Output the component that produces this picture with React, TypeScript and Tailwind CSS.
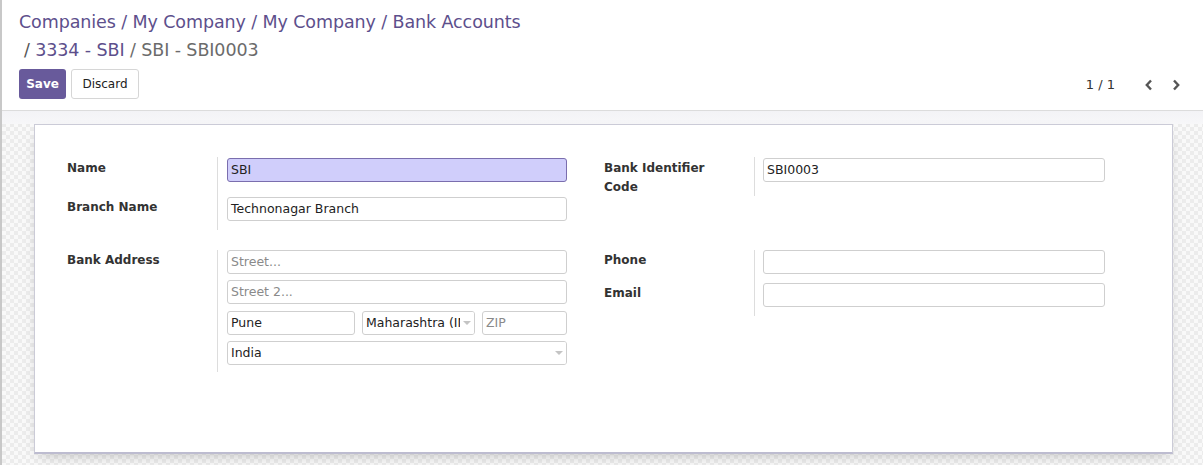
import React from "react";

function Field({
  value,
  placeholder,
  className = "",
  select = false,
  clip = false,
  highlight = false,
}: {
  value?: string;
  placeholder?: string;
  className?: string;
  select?: boolean;
  clip?: boolean;
  highlight?: boolean;
}) {
  return (
    <div
      className={`relative h-[24px] rounded-[3px] border flex items-center pl-[3px] pr-[3px] text-[12.5px] leading-none overflow-hidden whitespace-nowrap ${
        highlight ? "bg-[#d0cefb] border-[#7a6eae]" : "bg-white border-[#cfcfcf]"
      } ${className}`}
    >
      {value !== undefined ? (
        <span className={`text-[#222] ${clip ? "overflow-hidden pr-[12px]" : ""}`}>{value}</span>
      ) : (
        <span className="text-[#8a8a8a]">{placeholder}</span>
      )}
      {select && (
        <span className="absolute right-0 top-0 h-full w-[14px] bg-white flex items-center justify-center">
          <span className="w-0 h-0 border-l-[4px] border-r-[4px] border-t-[4px] border-l-transparent border-r-transparent border-t-[#c4c4c4]" />
        </span>
      )}
    </div>
  );
}

export default function App() {
  return (
    <div className="w-[1203px] h-[465px] overflow-hidden flex flex-col border-l-2 border-[#c8c8c8] bg-white font-['DejaVu_Sans',sans-serif] text-[#333]">
      {/* Control panel */}
      <div className="h-[111px] shrink-0 border-b border-[#dcdcdc] bg-white pl-[17px] pr-[22px] pt-[8px]">
        <div className="text-[17.5px] leading-[28px] tracking-[-0.1px]">
          <div className="whitespace-nowrap">
            <span className="text-[#5d4f8c]">Companies</span>
            <span className="text-[#5d4f8c]"> / </span>
            <span className="text-[#5d4f8c]">My Company</span>
            <span className="text-[#5d4f8c]"> / </span>
            <span className="text-[#5d4f8c]">My Company</span>
            <span className="text-[#5d4f8c]"> / </span>
            <span className="text-[#5d4f8c]">Bank Accounts</span>
          </div>
          <div className="whitespace-nowrap pl-[5px]">
            <span className="text-[#555]">/ </span>
            <span className="text-[#5d4f8c]">3334 - SBI</span>
            <span className="text-[#6b6b6b]"> / SBI - SBI0003</span>
          </div>
        </div>
        <div className="mt-[5px] flex items-center justify-between">
          <div className="flex gap-[5px]">
            <div className="h-[30px] w-[47px] rounded-[3px] bg-[#685a9b] text-white text-[12px] font-bold flex items-center justify-center">
              Save
            </div>
            <div className="h-[30px] w-[68px] rounded-[3px] bg-white border border-[#d6d6d6] text-[#222] text-[12px] flex items-center justify-center">
              Discard
            </div>
          </div>
          <div className="flex items-center text-[13px] text-[#333] pt-[2px]">
            <span>1 / 1</span>
            <svg className="ml-[29px]" width="10" height="12" viewBox="0 0 10 12">
              <path d="M7 1.5 L2.8 6 L7 10.5" fill="none" stroke="#555" strokeWidth="2.4" strokeLinejoin="miter" />
            </svg>
            <svg className="ml-[17px]" width="10" height="12" viewBox="0 0 10 12">
              <path d="M3 1.5 L7.2 6 L3 10.5" fill="none" stroke="#555" strokeWidth="2.4" strokeLinejoin="miter" />
            </svg>
          </div>
        </div>
      </div>

      {/* Sheet background */}
      <div className="flex-1 flex flex-col bg-[image:repeating-conic-gradient(#ececec_0_25%,#f9f9f9_0_50%)] bg-[length:8px_8px]">
        <div className="h-[13px] shrink-0 bg-[linear-gradient(#f3f3f6,#f7f7f9)]" />
        <div className="ml-[32px] mr-[30px] h-[330px] shrink-0 bg-white border border-[#cbcbd7] border-b-2 border-b-[#bdbcd0] shadow-[0_6px_14px_-6px_rgba(0,0,0,0.25)] pt-[32px] pl-[32px]">
          {/* Row A */}
          <div className="flex items-start gap-[37px]">
            <div className="w-[500px] grid grid-cols-[151px_349px] text-[12px] leading-[19px]">
              <div className="h-[39px] border-r border-[#dddddd] pt-[2px] font-bold text-[#333]">Name</div>
              <div className="pl-[9px] pt-[1px]">
                <Field value="SBI" highlight />
              </div>
              <div className="h-[34px] border-r border-[#dddddd] pt-[2px] font-bold text-[#333]">Branch Name</div>
              <div className="pl-[9px] pt-[1px]">
                <Field value="Technonagar Branch" />
              </div>
            </div>
            <div className="w-[501px] grid grid-cols-[151px_350px] text-[12px] leading-[19px]">
              <div className="h-[39px] border-r border-[#dddddd] pt-[2px] font-bold text-[#333]">
                Bank Identifier
                <br />
                Code
              </div>
              <div className="pl-[8px] pt-[1px]">
                <Field value="SBI0003" />
              </div>
            </div>
          </div>

          {/* Row B */}
          <div className="mt-[20px] flex items-start gap-[37px]">
            <div className="w-[500px] grid grid-cols-[151px_349px] text-[12px] leading-[19px]">
              <div className="h-[122px] border-r border-[#dddddd] pt-[1px] font-bold text-[#333]">Bank Address</div>
              <div className="pl-[9px] flex flex-col">
                <Field placeholder="Street..." />
                <Field placeholder="Street 2..." className="mt-[6px]" />
                <div className="mt-[7px] flex gap-[7px]">
                  <Field value="Pune" className="w-[128px] shrink-0" />
                  <Field value="Maharashtra (IN)" select clip className="w-[113px] shrink-0" />
                  <Field placeholder="ZIP" className="flex-1" />
                </div>
                <Field value="India" select className="mt-[6px]" />
              </div>
            </div>
            <div className="w-[501px] grid grid-cols-[151px_350px] text-[12px] leading-[19px]">
              <div className="h-[33px] border-r border-[#dddddd] pt-[1px] font-bold text-[#333]">Phone</div>
              <div className="pl-[8px]">
                <Field value="" />
              </div>
              <div className="h-[33px] border-r border-[#dddddd] pt-[1px] font-bold text-[#333]">Email</div>
              <div className="pl-[8px]">
                <Field value="" />
              </div>
            </div>
          </div>
        </div>
      </div>
    </div>
  );
}
